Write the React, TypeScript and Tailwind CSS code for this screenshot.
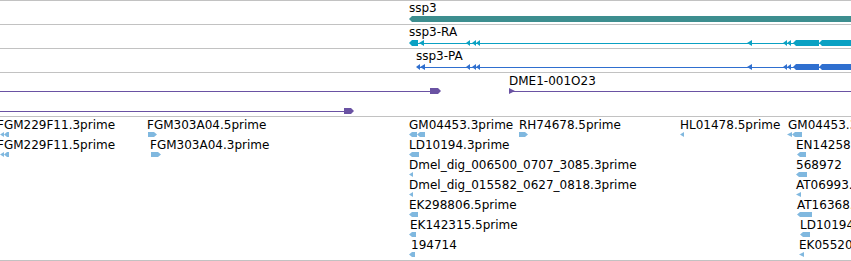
import React from 'react';

type Kind = 'lb' | 'rb' | 'lt' | 'rt' | 'ln';
type G = [Kind, number, number, number, number]; // kind, x1, x2, y, h

function pts(k: Kind, x1: number, x2: number, y: number, h: number): string {
  const m = y + h / 2;
  const a = Math.min(3, x2 - x1);
  switch (k) {
    case 'lb':
      return `${x1},${m} ${x1 + a},${y} ${x2},${y} ${x2},${y + h} ${x1 + a},${y + h}`;
    case 'rb':
      return `${x1},${y} ${x2 - a},${y} ${x2},${m} ${x2 - a},${y + h} ${x1},${y + h}`;
    case 'lt':
      return `${x1},${m} ${x2},${y} ${x2},${y + h}`;
    case 'rt':
      return `${x1},${y} ${x2},${m} ${x1},${y + h}`;
    default:
      return `${x1},${y} ${x2},${y} ${x2},${y + h} ${x1},${y + h}`;
  }
}

function Glyphs({ items, color, height }: { items: G[]; color: string; height: number }) {
  return (
    <svg className="absolute left-0 top-0" width={851} height={height}>
      {items.map(([k, x1, x2, y, h], i) =>
        k === 'ln' ? (
          <rect key={i} x={x1} y={y} width={x2 - x1} height={h} fill={color} />
        ) : (
          <polygon key={i} points={pts(k, x1, x2, y, h)} fill={color} />
        )
      )}
    </svg>
  );
}

type L = [string, number, number]; // text, left, top

function Labels({ items }: { items: L[] }) {
  return (
    <>
      {items.map(([t, x, y], i) => (
        <span key={i} className="absolute whitespace-nowrap" style={{ left: x, top: y }}>
          {t}
        </span>
      ))}
    </>
  );
}

// transcript structure shared by RA / PA (y offset 15, h 6; line at 18)
const tail: G[] = [
  ['lt', 466, 470, 15, 6],
  ['lt', 472, 476, 15, 6],
  ['lt', 476, 480, 15, 6],
  ['lt', 747, 752, 15, 6],
  ['lt', 783, 787, 15, 6],
  ['lt', 787, 791, 15, 6],
  ['lb', 793, 819, 15, 6],
  ['lb', 819, 860, 15, 6],
];

const ra: G[] = [
  ['ln', 412, 851, 18, 1],
  ['lb', 409, 418, 15, 6],
  ['lt', 419, 424, 15, 6],
  ...tail,
];

const pa: G[] = [
  ['ln', 418, 851, 18, 1],
  ['lt', 416, 420, 15, 6],
  ['lt', 420, 425, 15, 6],
  ...tail,
];

const purple: G[] = [
  ['ln', 0, 432, 18, 1],
  ['rb', 430, 441, 15, 6],
  ['ln', 512, 851, 18, 1],
  ['rt', 509, 515, 15, 6],
  ['ln', 0, 346, 38, 1],
  ['rb', 344, 354, 35, 6],
];

const r = (i: number) => 15 + 20 * i;

const ests: G[] = [
  // row 0
  ['lt', 0, 4, r(0), 5],
  ['lb', 4, 9, r(0), 5],
  ['rb', 148, 157, r(0), 5],
  ['lb', 409, 417, r(0), 5],
  ['lb', 417, 425, r(0), 5],
  ['rb', 519, 528, r(0), 5],
  ['lt', 680, 684, r(0), 5],
  ['lt', 787, 792, r(0), 5],
  ['lb', 792, 802, r(0), 5],
  // row 1
  ['lt', 0, 4, r(1), 5],
  ['lb', 4, 9, r(1), 5],
  ['rb', 151, 161, r(1), 5],
  ['lb', 409, 419, r(1), 5],
  ['lb', 797, 806, r(1), 5],
  // row 2
  ['lt', 409, 413, r(2), 5],
  ['lb', 796, 807, r(2), 5],
  // row 3
  ['lt', 409, 413, r(3), 5],
  ['lt', 796, 801, r(3), 5],
  // row 4
  ['lb', 409, 418, r(4), 5],
  ['lb', 797, 812, r(4), 5],
  // row 5
  ['lb', 409, 416, r(5), 5],
  ['lb', 800, 810, r(5), 5],
  // row 6
  ['lb', 409, 415, r(6), 5],
  ['lt', 799, 804, r(6), 5],
];

const t = (i: number) => 1 + 20 * i;

const estLabels: L[] = [
  ['FGM229F11.3prime', -3, t(0)],
  ['FGM303A04.5prime', 147, t(0)],
  ['GM04453.3prime', 409, t(0)],
  ['RH74678.5prime', 519, t(0)],
  ['HL01478.5prime', 680, t(0)],
  ['GM04453.3prime', 788, t(0)],
  ['FGM229F11.5prime', -3, t(1)],
  ['FGM303A04.3prime', 150, t(1)],
  ['LD10194.3prime', 409, t(1)],
  ['EN142585.5prime', 796, t(1)],
  ['Dmel_dig_006500_0707_3085.3prime', 409, t(2)],
  ['568972', 796, t(2)],
  ['Dmel_dig_015582_0627_0818.3prime', 409, t(3)],
  ['AT06993.5prime', 796, t(3)],
  ['EK298806.5prime', 409, t(4)],
  ['AT16368.5prime', 797, t(4)],
  ['EK142315.5prime', 410, t(5)],
  ['LD10194.5prime', 800, t(5)],
  ['194714', 411, t(6)],
  ['EK055202.5prime', 799, t(6)],
];

export default function App() {
  return (
    <div className="w-[851px] h-[261px] overflow-hidden bg-white text-[12px] leading-[14px] text-black font-['DejaVu_Sans',sans-serif]">
      <div className="flex flex-col">
        <div className="relative h-[24px] border-t border-[#c2c2c2]">
          <Glyphs color="#3d8e8f" height={23} items={[['lb', 409, 860, 15, 6]]} />
          <Labels items={[['ssp3', 409, 0]]} />
        </div>
        <div className="relative h-[24px] border-t border-[#c2c2c2]">
          <Glyphs color="#0aa1c3" height={23} items={ra} />
          <Labels items={[['ssp3-RA', 409, 0]]} />
        </div>
        <div className="relative h-[24px] border-t border-[#c2c2c2]">
          <Glyphs color="#2f6fcf" height={23} items={pa} />
          <Labels items={[['ssp3-PA', 416, 0]]} />
        </div>
        <div className="relative h-[44px] border-t border-[#c2c2c2]">
          <Glyphs color="#6a52a3" height={43} items={purple} />
          <Labels items={[['DME1-001O23', 509, 1]]} />
        </div>
        <div className="relative h-[145px] border-y border-[#c2c2c2]">
          <Glyphs color="#80b8df" height={143} items={ests} />
          <Labels items={estLabels} />
        </div>
      </div>
    </div>
  );
}
